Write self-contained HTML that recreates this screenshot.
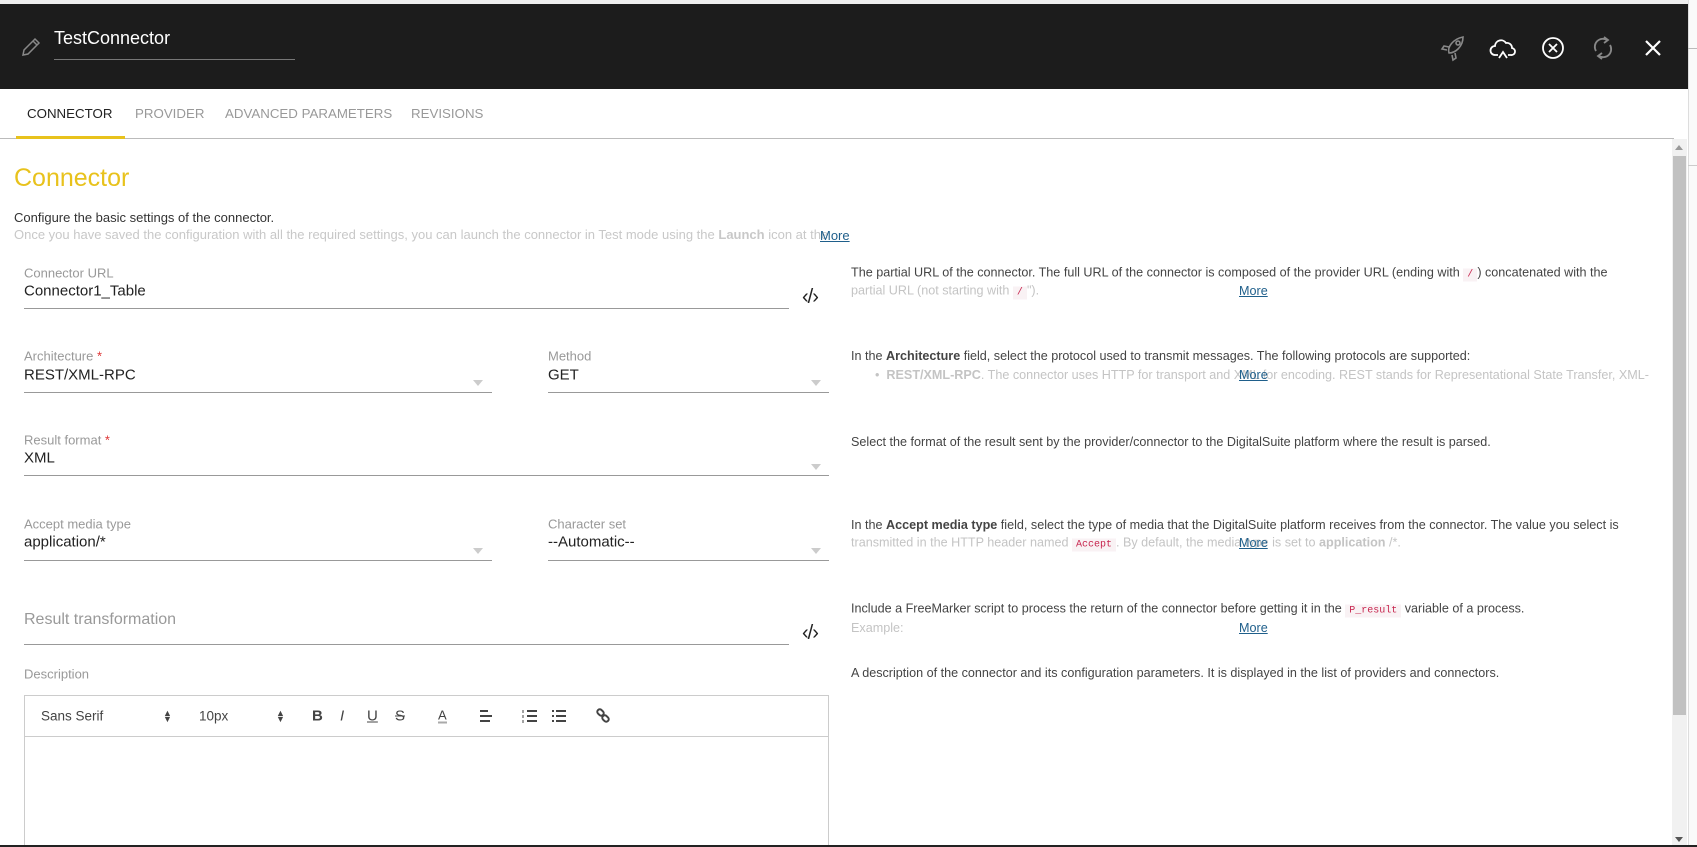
<!DOCTYPE html>
<html><head><meta charset="utf-8"><style>
*{margin:0;padding:0;box-sizing:border-box}
body{width:1697px;height:847px;overflow:hidden;background:#fff;font-family:"Liberation Sans",sans-serif;position:relative;color:#333}
.a{position:absolute;white-space:nowrap}
.lbl{font-size:13px;color:#999;transform:translateY(-50%)}
.val{font-size:15px;color:#222;transform:translateY(-50%)}
.ul{position:absolute;height:1px;background:#999}
.arr{position:absolute;width:0;height:0;border-left:5px solid transparent;border-right:5px solid transparent;border-top:6px solid #ccc}
.r{font-size:12.6px;color:#444;transform:translateY(-50%)}
.f{color:#c4c4c4}
.more{font-size:12.6px;color:#1f5f8b;text-decoration:underline;transform:translateY(-50%)}
code{font-family:"Liberation Mono",monospace;font-size:10px;color:#c7254e;background:#f9f2f4;padding:1px 4px}
.tb{position:absolute;top:716px;transform:translateY(-50%);font-size:14px;color:#444}
.code{position:absolute;font-size:20px;color:#222;letter-spacing:-1px}
</style></head><body>
<div class="a" style="left:0;top:0;width:1697px;height:4px;background:#eee"></div>
<div class="a" style="left:0;top:4px;width:1688px;height:85px;background:#1c1c1c"></div>
<div class="a" style="left:1688px;top:0;width:9px;height:847px;background:#fafafa;border-left:1px solid #ddd"></div>
<div class="a" style="left:1688px;top:48px;width:9px;height:1px;background:#bbb"></div>
<div class="a" style="left:1688px;top:165px;width:9px;height:1px;background:#ccc"></div>
<svg class="a" style="left:20px;top:36px" width="22" height="22" viewBox="0 0 22 22"><path d="M3 19 L4 14 L15 3 L19 7 L8 18 Z M13 5 L17 9" fill="none" stroke="#888" stroke-width="1.5"/></svg>
<div class="a" style="left:54px;top:28px;font-size:18px;color:#fff">TestConnector</div>
<div class="a" style="left:54px;top:59px;width:241px;height:1px;background:#777"></div>
<svg class="a" style="left:1439px;top:33px" width="30" height="30" viewBox="0 0 30 30" fill="none" stroke="#888" stroke-width="1.6"><path d="M10 20 C8 14 14 6 24 4 C24 14 16 20 10 20 Z"/><circle cx="19" cy="10" r="2"/><path d="M10 14 L5 13 L3 16 L8 17 M16 20 L17 25 L14 27 L13 22"/></svg>
<svg class="a" style="left:1489px;top:35px" width="28" height="26" viewBox="0 0 28 26" fill="none" stroke="#fff" stroke-width="1.8"><path d="M9 20 H6 A4.5 4.5 0 0 1 6 11 A6 6 0 0 1 17 8 A5 5 0 0 1 23 13 A3.5 3.5 0 0 1 22 20 H19"/><path d="M10 23 L14 17 L18 23"/></svg>
<svg class="a" style="left:1540px;top:35px" width="26" height="26" viewBox="0 0 26 26" fill="none" stroke="#fff" stroke-width="1.8"><circle cx="13" cy="13" r="10"/><path d="M9 9 L17 17 M17 9 L9 17"/></svg>
<svg class="a" style="left:1590px;top:35px" width="26" height="26" viewBox="0 0 26 26" fill="none" stroke="#888" stroke-width="1.8"><path d="M6 16 A8 8 0 0 1 17 5 M20 10 A8 8 0 0 1 9 21"/><path d="M14 2 L18 5 L14 8 M12 18 L8 21 L12 24"/></svg>
<svg class="a" style="left:1643px;top:38px" width="20" height="20" viewBox="0 0 20 20" stroke="#fff" stroke-width="2.2"><path d="M3 3 L17 17 M17 3 L3 17"/></svg>
<div class="a" style="left:27px;top:106px;font-size:13.3px;color:#222">CONNECTOR</div>
<div class="a" style="left:135px;top:106px;font-size:13.3px;color:#999">PROVIDER</div>
<div class="a" style="left:225px;top:106px;font-size:13.3px;color:#999">ADVANCED PARAMETERS</div>
<div class="a" style="left:411px;top:106px;font-size:13.3px;color:#999">REVISIONS</div>
<div class="a" style="left:0;top:138px;width:1674px;height:1px;background:#bbb"></div>
<div class="a" style="left:16px;top:136px;width:109px;height:3px;background:#e8c21c"></div>
<div class="a" style="left:1672px;top:139px;width:15px;height:708px;background:#f1f1f1"></div>
<div class="a" style="left:1675px;top:145px;border-left:4px solid transparent;border-right:4px solid transparent;border-bottom:5px solid #999;width:0;height:0"></div>
<div class="a" style="left:1673px;top:156px;width:13px;height:559px;background:#c1c1c1"></div>
<div class="a" style="left:1675px;top:837px;border-left:4px solid transparent;border-right:4px solid transparent;border-top:5px solid #555;width:0;height:0"></div>
<div class="a" style="left:14px;top:164px;font-size:25px;color:#e8c21c">Connector</div>
<div class="a" style="left:14px;top:210px;font-size:13px;color:#333">Configure the basic settings of the connector.</div>
<div class="a" style="left:14px;top:227px;font-size:13px;color:#c8c8c8">Once you have saved the configuration with all the required settings, you can launch the connector in Test mode using the <b>Launch</b> icon at the</div>
<div class="a" style="left:820px;top:228px;font-size:13px;color:#1f5f8b;text-decoration:underline">More</div>
<div class="a lbl" style="left:24px;top:273px">Connector URL</div>
<div class="a val" style="left:24px;top:291px">Connector1_Table</div>
<div class="ul" style="left:24px;top:308px;width:765px"></div>
<div class="code" style="left:802px;top:286px">&#x2039;/&#x203A;</div>
<div class="a lbl" style="left:24px;top:356px">Architecture <span style="color:#d33">*</span></div>
<div class="a val" style="left:24px;top:375px">REST/XML-RPC</div>
<div class="ul" style="left:24px;top:392px;width:468px"></div>
<div class="arr" style="left:473px;top:380px"></div>
<div class="a lbl" style="left:548px;top:356px">Method</div>
<div class="a val" style="left:548px;top:375px">GET</div>
<div class="ul" style="left:548px;top:392px;width:281px"></div>
<div class="arr" style="left:811px;top:380px"></div>
<div class="a lbl" style="left:24px;top:440px">Result format <span style="color:#d33">*</span></div>
<div class="a val" style="left:24px;top:458px">XML</div>
<div class="ul" style="left:24px;top:475px;width:805px"></div>
<div class="arr" style="left:811px;top:464px"></div>
<div class="a lbl" style="left:24px;top:524px">Accept media type</div>
<div class="a val" style="left:24px;top:542px">application/*</div>
<div class="ul" style="left:24px;top:560px;width:468px"></div>
<div class="arr" style="left:473px;top:548px"></div>
<div class="a lbl" style="left:548px;top:524px">Character set</div>
<div class="a val" style="left:548px;top:542px">--Automatic--</div>
<div class="ul" style="left:548px;top:560px;width:281px"></div>
<div class="arr" style="left:811px;top:548px"></div>
<div class="a" style="left:24px;top:620px;transform:translateY(-50%);font-size:16px;color:#999">Result transformation</div>
<div class="ul" style="left:24px;top:644px;width:765px"></div>
<div class="code" style="left:802px;top:622px">&#x2039;/&#x203A;</div>
<div class="a lbl" style="left:24px;top:674px">Description</div>
<div class="a" style="left:24px;top:695px;width:805px;height:152px;border:1px solid #ccc"></div>
<div class="a" style="left:24px;top:736px;width:805px;height:1px;background:#ccc"></div>
<div class="tb" style="left:41px;font-size:13.5px">Sans Serif</div>
<div class="tb" style="left:163px;font-size:9px;line-height:6px">▲<br>▼</div>
<div class="tb" style="left:199px;font-size:13.5px">10px</div>
<div class="tb" style="left:276px;font-size:9px;line-height:6px">▲<br>▼</div>
<div class="tb" style="left:312px;font-weight:bold;font-size:15px">B</div>
<div class="tb" style="left:340px;font-style:italic;font-size:15px">I</div>
<div class="tb" style="left:367px;text-decoration:underline;font-size:15px">U</div>
<div class="tb" style="left:395px;text-decoration:line-through;font-size:15px">S</div>
<div class="tb" style="left:438px;font-size:13px;border-bottom:2px solid #aaa;line-height:13px">A</div>
<svg class="a" style="left:479px;top:709px" width="14" height="14"><path d="M1 2H9M1 7H13M1 12H11" stroke="#444" stroke-width="2"/></svg>
<svg class="a" style="left:522px;top:709px" width="16" height="14"><path d="M5 2H15M5 7H15M5 12H15" stroke="#444" stroke-width="2"/><path d="M1 1v3M1 6v3M1 11v3" stroke="#444" stroke-width="1"/></svg>
<svg class="a" style="left:551px;top:709px" width="16" height="14"><path d="M5 2H15M5 7H15M5 12H15M1 2H3M1 7H3M1 12H3" stroke="#444" stroke-width="2"/></svg>
<svg class="a" style="left:595px;top:708px" width="16" height="16" fill="none" stroke="#444" stroke-width="2"><rect x="2" y="2" width="7" height="5" rx="2.5" transform="rotate(45 5.5 4.5)"/><rect x="7" y="8" width="7" height="5" rx="2.5" transform="rotate(45 10.5 10.5)"/></svg>
<div class="a r" style="left:851px;top:273px">The partial URL of the connector. The full URL of the connector is composed of the provider URL (ending with <code>/</code>) concatenated with the</div>
<div class="a r f" style="left:851px;top:291px">partial URL (not starting with <code>/</code>").</div>
<div class="a more" style="left:1239px;top:291px">More</div>
<div class="a r" style="left:851px;top:356px">In the <b>Architecture</b> field, select the protocol used to transmit messages. The following protocols are supported:</div>
<div class="a r f" style="left:875px;top:375px">• &nbsp;<b>REST/XML-RPC</b>. The connector uses HTTP for transport and XML for encoding. REST stands for Representational State Transfer, XML-</div>
<div class="a more" style="left:1239px;top:375px">More</div>
<div class="a r" style="left:851px;top:442px">Select the format of the result sent by the provider/connector to the DigitalSuite platform where the result is parsed.</div>
<div class="a r" style="left:851px;top:525px">In the <b>Accept media type</b> field, select the type of media that the DigitalSuite platform receives from the connector. The value you select is</div>
<div class="a r f" style="left:851px;top:543px">transmitted in the HTTP header named <code>Accept</code>. By default, the media type is set to <b>application</b> /*.</div>
<div class="a more" style="left:1239px;top:543px">More</div>
<div class="a r" style="left:851px;top:609px">Include a FreeMarker script to process the return of the connector before getting it in the <code>P_result</code> variable of a process.</div>
<div class="a r f" style="left:851px;top:628px">Example:</div>
<div class="a more" style="left:1239px;top:628px">More</div>
<div class="a r" style="left:851px;top:673px">A description of the connector and its configuration parameters. It is displayed in the list of providers and connectors.</div>
<div class="a" style="left:0;top:845px;width:1697px;height:2px;background:#222"></div>
</body></html>
